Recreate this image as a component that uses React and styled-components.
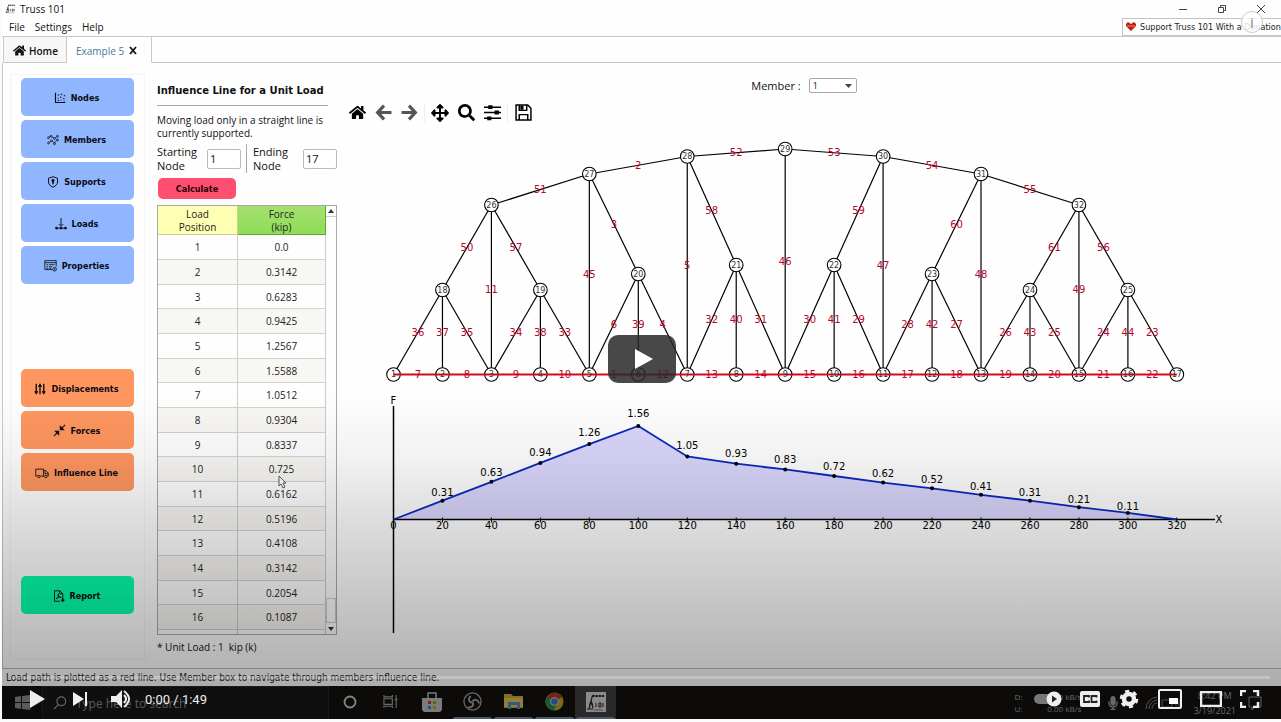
import React from "react";
import styled, { createGlobalStyle, css } from "styled-components";
import { FaHome, FaArrowsAlt, FaSearch, FaMicrophone } from "react-icons/fa";

const Global = createGlobalStyle`
  * { box-sizing: border-box; }
  body { margin: 0; background: #fafafa; overflow-x: hidden; }
  button, input, select { font: inherit; color: inherit; }
  button { cursor: pointer; }
  svg { flex-shrink: 0; }
`;

const ui = `"Open Sans", "Noto Sans", sans-serif`;
const condensed = `"DejaVu Sans Condensed", "DejaVu Sans", sans-serif`;
const line = "#c9c9c9";

const Player = styled.main`
  position: relative;
  margin: 0 0 3px 2px;
  background: #fefefe;
  font-family: ${ui};
  font-size: 10px;
  color: #111;
`;

/* ---------- window chrome ---------- */
const TitleBar = styled.header`
  display: flex;
  align-items: center;
  height: 17px;
  padding: 0 15px 0 3px;
  gap: 4px;
`;
const WindowButtons = styled.div`
  display: flex;
  gap: 29px;
  margin-left: auto;
  color: #444;
`;
const PlainButton = styled.button`
  display: flex;
  align-items: center;
  justify-content: center;
  padding: 0;
  border: 0;
  background: none;
`;
const MenuBar = styled.nav`
  display: flex;
  align-items: center;
  height: 20px;
  padding-left: 7px;
  gap: 10px;
  border-bottom: 1px solid ${line};
`;
const SupportLink = styled.a`
  display: flex;
  align-items: center;
  gap: 4px;
  width: 159px;
  height: 18px;
  margin-left: auto;
  padding-left: 3px;
  border: 1px solid #c4c4c4;
  border-right: 0;
  background: #fdfdfd;
  color: #222;
  font-family: ${condensed};
  font-size: 9px;
  white-space: nowrap;
  text-decoration: none;
`;
const TabStrip = styled.div`
  display: flex;
  height: 26px;
  padding-left: 1px;
`;
const Tab = styled.div`
  display: flex;
  align-items: center;
  gap: 4px;
  padding: 2px ${(p) => (p.$active ? 13 : 8)}px 0 9px;
  border: 1px solid ${line};
  border-top: 0;
  ${(p) =>
    p.$active
      ? css`
          border-left: 0;
          border-bottom-color: #fefefe;
          color: #4a7a99;
        `
      : css`
          background: #f7f7f7;
          font-weight: 600;
        `}
`;
const TabLabel = styled(PlainButton)`
  gap: 3px;
`;
const TabFill = styled.div`
  flex: 1;
  border-bottom: 1px solid ${line};
`;

/* ---------- body ---------- */
const Body = styled.div`
  display: grid;
  grid-template-columns: 135px 181px 1fr;
  align-items: start;
  padding: 11px 0 8px 7px;
  border-left: 1px solid ${line};
  border-bottom: 1px solid #bbb;
`;
const Sidebar = styled.aside`
  display: flex;
  flex-direction: column;
  gap: 85px;
  padding: 3px 10px 45px;
  border: 1px solid #f5f5f5;
`;
const Group = styled.div`
  display: flex;
  flex-direction: column;
  gap: 4px;
`;
const tones = { blue: "#8fb6ff", orange: "#ff965f", green: "#06ffaa" };
const SideButton = styled.button`
  display: flex;
  align-items: center;
  justify-content: center;
  gap: 5px;
  height: 38px;
  padding: 1px 2px 0 0;
  border: 0;
  border-radius: 5px;
  background: ${(p) => tones[p.$tone]};
  color: #0b0b12;
  font-family: ${condensed};
  font-size: 9px;
  font-weight: 700;
  white-space: nowrap;
`;

const Controls = styled.section`
  margin-left: 12px;
  padding-top: 9px;
  width: 181px;
  margin-right: -12px;
`;
const Heading = styled.h1`
  width: 171px;
  margin: 0;
  padding-bottom: 6px;
  border-bottom: 1px solid #aaa;
  font-family: "DejaVu Sans", sans-serif;
  font-size: 10px;
  line-height: 16px;
  white-space: nowrap;
`;
const Note = styled.p`
  margin: 8px 0 4px;
  line-height: 13px;
  font-weight: 500;
  white-space: nowrap;
`;
const NodeRow = styled.div`
  display: flex;
  align-items: center;
  height: 29px;
`;
const Field = styled.label`
  display: flex;
  align-items: center;
  justify-content: space-between;
  width: ${(p) => p.$width}px;
  line-height: 14px;
  font-size: 11px;
`;
const FieldName = styled.span`
  width: 44px;
`;
const NumberInput = styled.input`
  width: 34px;
  height: 20px;
  padding: 0 2px;
  border: 1px solid #bbb;
  border-radius: 2px;
  background: #fff;
`;
const Divider = styled.span`
  width: 1px;
  height: 29px;
  margin: 0 6px 0 5px;
  background: #aaa;
`;
const Calculate = styled.button`
  display: block;
  width: 78px;
  height: 21px;
  margin: 5px 0 6px 1px;
  padding: 0;
  border: 0;
  border-radius: 5px;
  background: #ff4f70;
  color: #210008;
  font-family: ${condensed};
  font-size: 9px;
  font-weight: 700;
`;
const TableFrame = styled.div`
  position: relative;
  display: flex;
  height: 430px;
  width: 180px;
  border: 1px solid #aaa;
  overflow: hidden;
`;
const Table = styled.table`
  align-self: flex-start;
  width: 168px;
  table-layout: fixed;
  border-collapse: separate;
  border-spacing: 0;
  text-align: center;
  color: #222;
`;
const HeadCell = styled.th`
  width: ${(p) => p.$width}px;
  height: 29px;
  padding: 1px 0 0;
  border-right: 1px solid ${(p) => p.$edge};
  border-bottom: 1px solid ${(p) => p.$edge};
  background: ${(p) => p.$fill};
  font-weight: 400;
  line-height: 13px;
`;
const Row = styled.tr`
  height: 25px;
  &:nth-child(3n) { height: 24px; }
  &:nth-child(even) { background: #f8f7f3; }
`;
const Cell = styled.td`
  padding: 0;
  border-right: 1px solid #ccc;
  border-bottom: 1px solid #d2d2d2;
  line-height: 14px;
`;
const ScrollBar = styled.div`
  display: flex;
  flex: 1;
  flex-direction: column;
  justify-content: space-between;
  background: #fdfdfd;
`;
const ScrollArrow = styled(PlainButton)`
  height: 11px;
  border-bottom: ${(p) => (p.$up ? "1px solid #ccc" : "0")};
`;
const ScrollThumb = styled.div`
  height: 25px;
  margin-top: auto;
  border: 1px solid #ccc;
`;
const Pointer = styled.svg`
  position: absolute;
  left: 120px;
  top: 269px;
`;
const UnitNote = styled.p`
  margin: 5px 0 0;
  line-height: 14px;
  white-space: pre;
`;

/* ---------- plot ---------- */
const PlotPane = styled.section`
  margin-left: 18px;
  padding-top: 3px;
`;
const MemberRow = styled.label`
  display: flex;
  align-items: center;
  justify-content: center;
  gap: 8px;
  height: 17px;
  padding-right: 17px;
  font-size: 11px;
  font-weight: 500;
`;
const SelectBox = styled.span`
  position: relative;
  display: flex;
  svg { position: absolute; right: 5px; top: 6px; pointer-events: none; }
`;
const MemberSelect = styled.select`
  appearance: none;
  width: 48px;
  height: 15px;
  padding: 0 3px;
  border: 1px solid #aaa;
  border-radius: 2px;
  background: #fff;
  font-size: 9px;
`;
const Toolbar = styled.div`
  display: flex;
  align-items: center;
  height: 37px;
  margin-bottom: 4px;
`;
const Tool = styled(PlainButton)`
  width: 26px;
  height: 26px;
  color: ${(p) => (p.$dim ? "#555" : "#000")};
`;
const ToolGap = styled.span`
  width: 1px;
  height: 18px;
  margin: 0 2px;
  background: #eee;
`;
const Plot = styled.svg`
  display: block;
  width: 100%;
  height: auto;
  font-family: "DejaVu Sans", sans-serif;
  font-size: 10px;
  text-anchor: middle;
`;

const StatusBar = styled.footer`
  height: 17px;
  padding-left: 4px;
  line-height: 18px;
  background: #fafafa;
  color: #222;
  font-family: ${condensed};
  font-size: 10px;
  white-space: nowrap;
`;

/* ---------- desktop task bar ---------- */
const TaskBar = styled.div`
  display: flex;
  align-items: stretch;
  height: 33px;
  background: #12100e;
  color: #999;
`;
const StartButton = styled(PlainButton)`
  width: 40px;
`;
const SearchBox = styled.label`
  display: flex;
  align-items: center;
  gap: 9px;
  width: 287px;
  padding-left: 10px;
  border: 1px solid #262626;
  border-bottom: 0;
  background: #161616;
`;
const SearchInput = styled.input`
  width: 200px;
  padding: 0;
  border: 0;
  background: none;
  font-size: 12px;
  &::placeholder { color: #858585; opacity: 1; }
`;
const TaskButton = styled(PlainButton)`
  width: 41px;
  border-bottom: 2px solid ${(p) => (p.$open ? "#76859a" : "transparent")};
  border-left: 3px solid transparent;
  border-right: 3px solid transparent;
  background: ${(p) => (p.$active ? "#3c3c3c" : "none")};
`;
const Tray = styled.div`
  display: flex;
  align-items: center;
  gap: 25px;
  margin-left: auto;
  padding-right: 19px;
`;
const TrayGroup = styled.div`
  display: flex;
  align-items: center;
  gap: 12px;
`;
const TrayText = styled.div`
  white-space: pre;
  line-height: ${(p) => (p.$size ? 15 : 12)}px;
  text-align: ${(p) => p.$align || "left"};
  font-size: ${(p) => p.$size || 8}px;
`;

/* ---------- video overlay ---------- */
const Shade = styled.div`
  position: absolute;
  inset: 0;
  pointer-events: none;
  background: linear-gradient(
    to top,
    rgba(0, 0, 0, 0.33) 0,
    rgba(0, 0, 0, 0.29) 55px,
    rgba(0, 0, 0, 0.22) 120px,
    rgba(0, 0, 0, 0.13) 200px,
    rgba(0, 0, 0, 0.05) 260px,
    rgba(0, 0, 0, 0) 325px
  );
`;
const BigPlay = styled.button`
  position: absolute;
  left: 50%;
  top: 50%;
  width: 68px;
  height: 48px;
  margin: -25px 0 0 -34px;
  padding: 0;
  border: 0;
  border-radius: 10px;
  background: rgba(40, 40, 40, 0.85);
`;
const InfoButton = styled.button`
  position: absolute;
  top: 11px;
  right: 18px;
  width: 22px;
  height: 22px;
  padding: 0;
  border: 1px solid #ccc;
  border-radius: 50%;
  background: rgba(255, 255, 255, 0.85);
  color: #888;
  font-size: 15px;
  line-height: 20px;
`;
const Progress = styled.div`
  position: absolute;
  left: 10px;
  right: 11px;
  bottom: 40px;
  height: 3px;
  background: rgba(255, 255, 255, 0.25);
`;
const PlayerBar = styled.div`
  position: absolute;
  left: 0;
  right: 0;
  bottom: 5px;
  display: flex;
  align-items: center;
  justify-content: space-between;
  height: 30px;
  padding: 0 21px 0 27px;
  color: #eee;
`;
const BarGroup = styled.div`
  display: flex;
  align-items: center;
  gap: ${(p) => p.$gap}px;
`;
const NextButton = styled(PlainButton)`
  margin-left: 5px;
`;
const Time = styled.span`
  margin-left: -9px;
  font: 13px Roboto, sans-serif;
`;

/* ---------- icons ---------- */
const Stroke = ({ w = 14, h = w, box = "0 0 16 16", sw = 1, children }) => (
  <svg width={w} height={h} viewBox={box} fill="none" stroke="currentColor" strokeWidth={sw} aria-hidden="true">
    {children}
  </svg>
);
const icons = {
  Nodes: (
    <Stroke w={12}>
      <path d="M2 1v13h13" strokeWidth="1.5" />
      <path d="M5 4h2M9 3h2M13 5h2M5 8h1M8 7h2M12 9h2M5 11h2M9 11h1M13 12h1" strokeWidth="1.6" />
    </Stroke>
  ),
  Members: (
    <Stroke w={12}>
      <path d="M1 5l4-2 5 3 4-3M2 12l4-3 4 3 4-5" />
      <g fill="#8fb6ff">
        <circle cx="2" cy="5" r="1.2" /><circle cx="5.500" cy="3" r="1.200" /><circle cx="10" cy="6" r="1.200" />
        <circle cx="14" cy="3" r="1.200" /><circle cx="2" cy="12" r="1.200" /><circle cx="6" cy="9" r="1.200" />
        <circle cx="10" cy="13" r="1.200" /><circle cx="14" cy="8" r="1.200" />
      </g>
    </Stroke>
  ),
  Supports: (
    <Stroke w={12} sw={1.3}>
      <path d="M8 1l6 2v5c0 3-2 5-6 7-4-2-6-4-6-7V3z" />
      <circle cx="8" cy="6" r="1.500" fill="currentColor" /><path d="M8 6v5" strokeWidth="2" />
    </Stroke>
  ),
  Loads: (
    <Stroke w={12} sw={1.2}>
      <path d="M8 0v10M5 8l3 3 3-3" /><path d="M3 13.500h10" />
      <g fill="currentColor"><circle cx="2" cy="13.500" r="1.300" /><circle cx="8" cy="13.500" r="1.300" /><circle cx="14" cy="13.500" r="1.300" /></g>
    </Stroke>
  ),
  Properties: (
    <Stroke w={13}>
      <path d="M10 13H1V2h14v7M1 4.500h14M3 7h2M6 7h7M3 9.500h2M6 9.500h4M3 11.500h2M6 11.500h3" />
      <circle cx="13" cy="12.500" r="2.300" /><circle cx="13" cy="12.500" r=".5" />
    </Stroke>
  ),
  Displacements: (
    <Stroke w={12} sw={1.8}>
      <path d="M3 1v12M1 11l2 3 2-3M8 15V3M6 5l2-3 2 3M13 1v12M11 11l2 3 2-3" />
    </Stroke>
  ),
  Forces: (
    <Stroke w={13} sw={1.3}>
      <path d="M15 1l-5 5M1 15l5-5" />
      <path d="M9 3v4h4zM7 13V9H3z" fill="currentColor" />
    </Stroke>
  ),
  "Influence Line": (
    <Stroke w={14} h={12} box="0 0 18 14" sw={1.1}>
      <path d="M3 11H1V2h10v9H7M11 4h3l3 3v4h-1M12 11h-1M13 5v3h4" />
      <circle cx="5" cy="11.500" r="1.600" /><circle cx="14" cy="11.500" r="1.600" />
    </Stroke>
  ),
  Report: (
    <Stroke w={12} sw={1.2}>
      <path d="M9 15H2V1h7l4 4v5M9 1v4h4" />
      <path d="M4 12c3-2 4-5 3-7-1 3 2 5 4 5-3-1-5 0-7 2z" /><path d="M13 10v5M11 13l2 2 2-2" strokeWidth="1.600" />
    </Stroke>
  ),
};

const TrussLogo = ({ size, dark }) => (
  <svg width={size} height={size} viewBox="0 0 20 20" aria-hidden="true">
    {dark && <rect width="20" height="20" fill="#c9c9c9" />}
    <g fill="none" stroke="#222">
      <path d="M3 17L6 5l2-2M1 17h6M5 8l2 8M3 12h4" strokeWidth="1.200" />
      <path d="M6 4h12" strokeWidth="2" strokeDasharray="2.500 .8" />
      <path d="M10 11v4M13 11h2v4h-2zM17 11v4" /><path d="M8 18h9" strokeWidth=".5" />
    </g>
  </svg>
);

/* ---------- data ---------- */
const forces = ["0.0", "0.3142", "0.6283", "0.9425", "1.2567", "1.5588", "1.0512", "0.9304", "0.8337", "0.725", "0.6162", "0.5196", "0.4108", "0.3142", "0.2054", "0.1087", "0.0"];

const X0 = 49.5;
const STEP = 48.96;
const BASE = 239.5;
const nodes = {};
for (let i = 0; i < 17; i++) nodes[i + 1] = [X0 + STEP * i, BASE];
[155, 155, 139, 130, 130, 139, 155, 155].forEach((y, i) => { nodes[18 + i] = [X0 + STEP * (1 + 2 * i), y]; });
[70, 39, 21.5, 14, 21.5, 39, 70].forEach((y, i) => { nodes[26 + i] = [X0 + STEP * (2 + 2 * i), y]; });

const members = [
  [36, 1, 18], [37, 2, 18], [35, 3, 18], [34, 3, 19], [38, 4, 19], [33, 5, 19], [6, 5, 20], [39, 6, 20], [4, 7, 20],
  [32, 7, 21], [40, 8, 21], [31, 9, 21], [30, 9, 22], [41, 10, 22], [29, 11, 22], [28, 11, 23], [42, 12, 23], [27, 13, 23],
  [26, 13, 24], [43, 14, 24], [25, 15, 24], [24, 15, 25], [44, 16, 25], [23, 17, 25],
  [50, 18, 26], [11, 3, 26], [57, 26, 19], [45, 5, 27], [3, 27, 20], [5, 7, 28], [58, 28, 21], [46, 9, 29],
  [59, 30, 22], [47, 11, 30], [60, 31, 23], [48, 13, 31], [61, 32, 24], [49, 15, 32], [56, 32, 25],
  [51, 26, 27], [2, 27, 28], [52, 28, 29], [53, 29, 30], [54, 30, 31], [55, 31, 32],
];
const chord = [7, 8, 9, 10, 1, 12, 13, 14, 15, 16, 17, 18, 19, 20, 21, 22];

const AXIS = 384.5;
const points = forces.map((f, i) => [X0 + STEP * i, AXIS - Number(f) * 60]);

function TrussPlot() {
  const outline = points.map((p) => p.join(",")).join(" ");
  return (
    <Plot viewBox="0 0 937 505" role="img" aria-label="Truss and influence line">
      <g stroke="#000" strokeWidth="1.2">
        {members.map(([id, a, b]) => (
          <line key={id} x1={nodes[a][0]} y1={nodes[a][1]} x2={nodes[b][0]} y2={nodes[b][1]} />
        ))}
      </g>
      <g fill="#fff" stroke="#000" strokeWidth="1.1">
        {Object.entries(nodes).map(([id, [x, y]]) => <circle key={id} cx={x} cy={y} r="6.8" />)}
      </g>
      <line x1={X0} x2={X0 + STEP * 16} y1={BASE} y2={BASE} stroke="#d20a1e" strokeWidth="2" />
      <g fontSize="8" fill="#333">
        {Object.entries(nodes).map(([id, [x, y]]) => <text key={id} x={x} y={y + 2.5}>{id}</text>)}
      </g>
      <g fill="#b8062c">
        {members.map(([id, a, b]) => (
          <text key={id} x={(nodes[a][0] + nodes[b][0]) / 2} y={(nodes[a][1] + nodes[b][1]) / 2 + 3.5}>{id}</text>
        ))}
        {chord.map((id, i) => <text key={id} x={X0 + STEP * (i + 0.5)} y={BASE + 3}>{id}</text>)}
      </g>

      <polygon points={outline} fill="#dad6fc" />
      <path d={`M${X0} 271V498M${X0} ${AXIS}H871`} stroke="#000" strokeWidth="1.5" />
      <polyline points={outline} fill="none" stroke="#0a28c0" strokeWidth="1.8" />
      <g fill="#000">
        <text x={X0} y="269">F</text>
        <text x="875" y="388">X</text>
        {points.map(([x, y], i) => (
          <g key={i}>
            {i > 0 && <path d={`M${x} ${AXIS - 2}v5`} stroke="#000" />}
            {i > 0 && i < 16 && <circle cx={x} cy={y} r="2" />}
            {i > 0 && i < 16 && (
              <text x={x} y={AXIS - Number(forces[i]) * 64 - 3}>{(Math.floor(Number(forces[i]) * 100 + (i === 9 ? 0 : 0.5)) / 100).toFixed(2)}</text>
            )}
            <text x={x} y="394">{i * 20}</text>
          </g>
        ))}
      </g>
    </Plot>
  );
}

const Side = ({ tone, name }) => <SideButton $tone={tone}>{icons[name]}{name}</SideButton>;

function ForceTable() {
  return (
    <TableFrame>
      <Table>
        <thead>
          <tr>
            <HeadCell $width={80} $fill="#ffffb3" $edge="#cfcf90">Load<br />Position</HeadCell>
            <HeadCell $width={88} $fill="linear-gradient(#a5e070, #8fdc58)" $edge="#5fa838">Force<br />(kip)</HeadCell>
          </tr>
        </thead>
        <tbody>
          {forces.slice(0, 16).map((f, i) => <Row key={i}><Cell>{i + 1}</Cell><Cell>{f}</Cell></Row>)}
          <Row><Cell /><Cell /></Row>
        </tbody>
      </Table>
      <ScrollBar>
        <ScrollArrow $up aria-label="Scroll up"><svg width="6" height="4"><path d="M0 4l3-4 3 4z" fill="#333" /></svg></ScrollArrow>
        <ScrollThumb />
        <ScrollArrow aria-label="Scroll down"><svg width="6" height="4"><path d="M0 0l3 4 3-4z" fill="#333" /></svg></ScrollArrow>
      </ScrollBar>
      <Pointer width="9" height="14" viewBox="0 0 9 14"><path d="M1 1v10l2-2 2 4 2-1-2-4h3z" fill="#fff" stroke="#333" strokeWidth=".8" /></Pointer>
    </TableFrame>
  );
}

function Desktop() {
  return (
    <TaskBar>
      <StartButton aria-label="Start">
        <svg width="15" height="15" viewBox="0 0 15 15" fill="#858585"><path d="M0 2l6-1v6H0zM7 1l8-1v7H7zM0 8h6v6l-6-1zM7 8h8v7l-8-1z" /></svg>
      </StartButton>
      <SearchBox>
        <Stroke w={14} sw={1.3}><circle cx="9.500" cy="6" r="5" /><path d="M6 10l-5 5" /></Stroke>
        <SearchInput placeholder="Type here to search" />
      </SearchBox>
      <TaskButton aria-label="Cortana"><svg width="14" height="14"><circle cx="7" cy="7" r="5.500" fill="none" stroke="#c4c4c4" strokeWidth="1.800" /></svg></TaskButton>
      <TaskButton aria-label="Task view">
        <Stroke w={15} sw={1.2}><path d="M1 1v2h9V1M1 15v-2h9v2M1 5h9v6H1zM14 1v14M12.500 6h3" /></Stroke>
      </TaskButton>
      <TaskButton aria-label="Store">
        <svg width="20" height="20" viewBox="0 0 20 20">
          <path d="M6 6V1h8v5" fill="none" stroke="#aaa" strokeWidth="1.500" /><path d="M0 6h20v12l-2 2H2l-2-2z" fill="#b4b4b4" />
          <path d="M6 9h3v3H6z" fill="#b33a20" /><path d="M11 9h3v3h-3z" fill="#6f9d1e" /><path d="M6 14h3v3H6z" fill="#1d83b5" /><path d="M11 14h3v3h-3z" fill="#c49012" />
        </svg>
      </TaskButton>
      <TaskButton $open aria-label="OBS">
        <svg width="19" height="19" viewBox="0 0 20 20" fill="none" stroke="#999" strokeWidth="1.400">
          <circle cx="10" cy="10" r="9" /><path d="M10 11c-4 0-5-4-2-7M10 10c2-3 6-2 7 2M10 11c2 3-1 6-5 5" strokeWidth="2" />
        </svg>
      </TaskButton>
      <TaskButton $open aria-label="File Explorer">
        <svg width="19" height="17" viewBox="0 0 19 17">
          <path d="M0 1h7l2 2h10v12H0z" fill="#c5a032" /><path d="M0 5h19v9H0z" fill="#d5b755" /><path d="M4 16V9h12v7h-3v-4H7v4z" fill="#4289b5" />
        </svg>
      </TaskButton>
      <TaskButton $open aria-label="Chrome">
        <svg width="19" height="19" viewBox="0 0 20 20">
          <circle cx="10" cy="10" r="9.500" fill="#b59b1d" />
          <path d="M10 10L1.800 5.200A9.500 9.500 0 0 1 18.200 5.200z" fill="#a8342a" /><path d="M10 10L1.800 5.200A9.500 9.500 0 0 0 9 19.500l4-7z" fill="#24834a" />
          <circle cx="10" cy="10" r="4.600" fill="#bbb" /><circle cx="10" cy="10" r="3.500" fill="#336ebc" />
        </svg>
      </TaskButton>
      <TaskButton $open $active aria-label="Truss 101"><TrussLogo size={20} dark /></TaskButton>
      <Tray>
        <TrayText>{"D:\nU:"}</TrayText>
        <TrayText $align="right">{"0.00 kB/s\n0.00 kB/s"}</TrayText>
        <FaMicrophone size={14} />
        <TrayGroup>
          <svg width="36" height="14" viewBox="0 0 36 14" fill="none" stroke="#777">
            <path d="M1 13a12 12 0 0 1 11-12M4 13a9 9 0 0 1 8-9M7 13a6 6 0 0 1 5-6" /><path d="M17 4h10v7H17zM31 5v5M34 3v9" />
          </svg>
          <TrayText $align="center" $size={9}>{"8:42 PM\n3/19/2021"}</TrayText>
          <svg width="14" height="14" viewBox="0 0 14 14" fill="none" stroke="#888"><path d="M1 1h12v10H7l-3 3v-3H1z" /></svg>
        </TrayGroup>
      </Tray>
    </TaskBar>
  );
}

function VideoControls() {
  return (
    <PlayerBar>
      <BarGroup $gap={22}>
        <PlainButton aria-label="Play"><svg width="16" height="20"><path d="M1 1l15 9-15 9z" fill="#eee" /></svg></PlainButton>
        <NextButton aria-label="Next"><svg width="16" height="16"><path d="M1 1l11 7-11 7zM13 1h2v14h-2z" fill="#eee" /></svg></NextButton>
        <PlainButton aria-label="Mute">
          <svg width="22" height="20" viewBox="0 0 22 20"><path d="M1 7h5l6-6v18l-6-6H1z" fill="#eee" /><path d="M14 6q4 4 0 8M14 2q10 8 0 16" fill="none" stroke="#eee" strokeWidth="2" /></svg>
        </PlainButton>
        <Time>0:00 / 1:49</Time>
      </BarGroup>
      <BarGroup $gap={18}>
        <PlainButton aria-label="Autoplay">
          <svg width="28" height="16" viewBox="0 0 28 16"><rect x="0" y="3" width="24" height="10" rx="5" fill="#777" /><circle cx="20" cy="8" r="7.500" fill="#eee" /><path d="M18 4.500l5 3.500-5 3.500z" fill="#222" /></svg>
        </PlainButton>
        <PlainButton aria-label="Captions">
          <svg width="20" height="16" viewBox="0 0 20 16"><rect width="20" height="16" rx="2" fill="#eee" /><path d="M9 6.500V5H4v6h5V9.500M16.500 6.500V5h-5v6h5V9.500" fill="none" stroke="#222" strokeWidth="1.800" /></svg>
        </PlainButton>
        <PlainButton aria-label="Settings">
          <svg width="22" height="20" viewBox="0 0 22 20"><circle cx="11" cy="10" r="5" fill="none" stroke="#eee" strokeWidth="4.500" /><circle cx="11" cy="10" r="7.800" fill="none" stroke="#eee" strokeWidth="3" strokeDasharray="4.100 4.060" /></svg>
        </PlainButton>
        <PlainButton aria-label="Miniplayer"><svg width="24" height="20"><rect x="1" y="1" width="22" height="18" rx="1" fill="none" stroke="#eee" strokeWidth="2" /><path d="M11 9h9v6h-9z" fill="#fff" /></svg></PlainButton>
        <PlainButton aria-label="Theater mode"><svg width="22" height="16"><path d="M1 1h20v14H1z" fill="none" stroke="#eee" strokeWidth="2.500" /></svg></PlainButton>
        <PlainButton aria-label="Full screen"><svg width="20" height="18"><path d="M1 6V1h5M13 1h5v5M18 12v5h-5M6 17H1v-5" fill="none" stroke="#eee" strokeWidth="2.500" /></svg></PlainButton>
      </BarGroup>
    </PlayerBar>
  );
}

export default function App() {
  return (
    <>
      <Global />
      <Player>
        <TitleBar>
          <TrussLogo size={11} />
          <span>Truss 101</span>
          <WindowButtons>
            <PlainButton aria-label="Minimize"><Stroke w={10} box="0 0 10 10"><path d="M1 5.500h8" /></Stroke></PlainButton>
            <PlainButton aria-label="Restore"><Stroke w={10} box="0 0 10 10"><path d="M1.500 3.500h5v5h-5zM3.500 3V1.500h5v5H7" /></Stroke></PlainButton>
            <PlainButton aria-label="Close"><Stroke w={10} box="0 0 10 10"><path d="M1 1l8 8M9 1L1 9" /></Stroke></PlainButton>
          </WindowButtons>
        </TitleBar>
        <MenuBar>
          <PlainButton>File</PlainButton>
          <PlainButton>Settings</PlainButton>
          <PlainButton>Help</PlainButton>
          <SupportLink href="#donate">
            <svg width="10" height="9" viewBox="0 0 10 9"><path d="M5 9L0 4V2l2-2 3 2 3-2 2 2v2z" fill="#c4161c" /><path d="M1 4h8" stroke="#e9a13b" /></svg>
            Support Truss 101 With a Donation
          </SupportLink>
        </MenuBar>
        <TabStrip>
          <Tab><TabLabel><FaHome size={13} />Home</TabLabel></Tab>
          <Tab $active>
            <TabLabel>Example 5</TabLabel>
            <PlainButton aria-label="Close tab"><svg width="10" height="9"><path d="M2 1l6 7M8 1L2 8" stroke="#111" strokeWidth="1.800" /></svg></PlainButton>
          </Tab>
          <TabFill />
        </TabStrip>

        <Body>
          <Sidebar>
            <Group>
              {["Nodes", "Members", "Supports", "Loads", "Properties"].map((n) => <Side key={n} tone="blue" name={n} />)}
            </Group>
            <Group>
              {["Displacements", "Forces", "Influence Line"].map((n) => <Side key={n} tone="orange" name={n} />)}
            </Group>
            <Group><Side tone="green" name="Report" /></Group>
          </Sidebar>

          <Controls>
            <Heading>Influence Line for a Unit Load</Heading>
            <Note>Moving load only in a straight line is<br />currently supported.</Note>
            <NodeRow>
              <Field $width={84}><FieldName>Starting Node</FieldName><NumberInput defaultValue="1" /></Field>
              <Divider />
              <Field $width={84}><FieldName>Ending Node</FieldName><NumberInput defaultValue="17" /></Field>
            </NodeRow>
            <Calculate>Calculate</Calculate>
            <ForceTable />
            <UnitNote>{"* Unit Load : 1  kip (k)"}</UnitNote>
          </Controls>

          <PlotPane>
            <MemberRow>
              Member :
              <SelectBox>
                <MemberSelect defaultValue="1"><option>1</option><option>2</option></MemberSelect>
                <svg width="7" height="4"><path d="M0 0h7l-3.500 4z" fill="#444" /></svg>
              </SelectBox>
            </MemberRow>
            <Toolbar>
              <Tool aria-label="Home"><FaHome size={17} /></Tool>
              <Tool $dim aria-label="Back"><Stroke w={17} sw={3}><path d="M8.500 1.500L2.500 8l6 6.500M3 8h12.500" /></Stroke></Tool>
              <Tool $dim aria-label="Forward"><Stroke w={17} sw={3}><path d="M7.500 1.500l6 6.500-6 6.500M13 8H.5" /></Stroke></Tool>
              <ToolGap />
              <Tool aria-label="Pan"><FaArrowsAlt size={18} /></Tool>
              <Tool aria-label="Zoom"><FaSearch size={17} /></Tool>
              <Tool aria-label="Configure">
                <Stroke w={17} sw={1.4}><path d="M0 3h16M0 8h16M0 13.500h16" /><path d="M4 3h4M10 8h4M3 13.500h4" strokeWidth="3.600" /></Stroke>
              </Tool>
              <ToolGap />
              <Tool aria-label="Save">
                <Stroke w={17} sw={1.4}><path d="M1 1h11l3 3v11H1zM4 1v5h7V1M4 15v-5h8v5" /><path d="M5 3.500h3" strokeWidth="4" /></Stroke>
              </Tool>
            </Toolbar>
            <TrussPlot />
          </PlotPane>
        </Body>
        <StatusBar>Load path is plotted as a red line. Use Member box to navigate through members influence line.</StatusBar>
        <Desktop />

        <Shade />
        <BigPlay aria-label="Play video"><svg width="68" height="48"><path d="M27 14v20l18-10z" fill="#fff" /></svg></BigPlay>
        <InfoButton aria-label="Info">i</InfoButton>
        <Progress />
        <VideoControls />
      </Player>
    </>
  );
}
